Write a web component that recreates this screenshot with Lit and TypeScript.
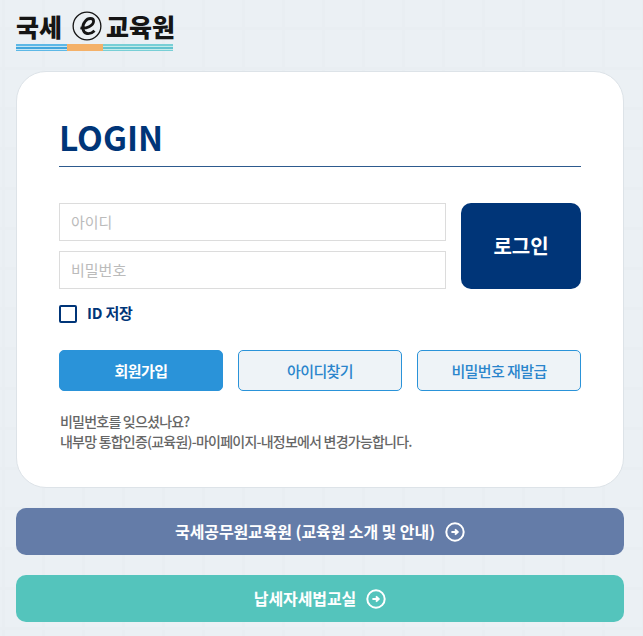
import { LitElement, html, css } from "lit";
import { customElement } from "lit/decorators.js";

const arrow = (size: number) => html`<svg class="arrow" width=${size} height=${size} viewBox="0 0 20 20" fill="none" stroke="#fff">
  <circle cx="10" cy="10" r="8.7" stroke-width="2"></circle>
  <path d="M6.4 10h5.8M10 7.4l2.7 2.6-2.7 2.6" stroke-width="2"></path>
</svg>`;

@customElement("app-root")
export class AppRoot extends LitElement {
  static styles = css`
    :host {
      display: block;
      width: 643px;
      height: 636px;
      overflow: hidden;
      box-sizing: border-box;
      padding: 0 19px 0 16px;
      background-color: #ebf0f4;
      background-image:
        linear-gradient(#e9eef2 3px, transparent 3px),
        linear-gradient(90deg, #e9eef2 3px, transparent 3px);
      background-size: 40px 40px;
      background-position: 2px 27px;
      font-family: "Noto Sans CJK KR", "Noto Sans", sans-serif;
      letter-spacing: -0.5px;
    }
    * { box-sizing: border-box; }
    .logo { height: 71px; padding-top: 8px; width: 157px; }
    .logo-text {
      height: 36px;
      display: flex;
      align-items: center;
      white-space: nowrap;
      color: #151515;
      font-weight: 900;
      font-size: 25px;
      line-height: 36px;
      letter-spacing: 0;
    }
    .logo-e { flex: none; margin: 0 4px 0 10px; }
    .stripes { display: flex; height: 7px; }
    .stripes i { display: block; height: 100%; }
    .s1 { width: 51px; background: repeating-linear-gradient(#5db8e6 0 2px, #c4e5f4 2px 3px, #42a6dc 3px 5px, #c4e5f4 5px 6px, #5db8e6 6px 7px); }
    .s2 { width: 36px; background: #f4b169; }
    .s3 { width: 70px; background: repeating-linear-gradient(#78cfd6 0 2px, #c4ebea 2px 3px, #63c3cf 3px 5px, #c4ebea 5px 6px, #78cfd6 6px 7px); }
    .card {
      height: 417px;
      background: #fff;
      border: 1px solid #dde3e8;
      border-radius: 30px;
      padding: 43px 42px 0;
    }
    h1 {
      margin: 0;
      height: 52px;
      font-size: 33.5px;
      line-height: 43px;
      font-weight: 700;
      letter-spacing: 0;
      color: #003578;
      border-bottom: 1px solid #2d5a8e;
    }
    .form { display: flex; gap: 15px; margin-top: 36px; }
    .fields { flex: 1; display: flex; flex-direction: column; gap: 10px; }
    .field {
      height: 38px;
      border: 1px solid #dcdcdc;
      padding: 0 11px;
      font-size: 15px;
      line-height: 35px;
      color: #bbbbbb;
      letter-spacing: 0;
    }
    .login {
      width: 120px;
      height: 86px;
      background: #003578;
      color: #fff;
      border-radius: 10px;
      font-size: 20px;
      line-height: 30px;
      font-weight: 700;
      display: flex;
      align-items: center;
      justify-content: center;
      letter-spacing: 0;
    }
    .save { display: flex; align-items: center; gap: 10px; margin-top: 16px; height: 18px; color: #003578; font-size: 15px; font-weight: 700; letter-spacing: -0.2px; }
    .save span:last-child { margin-top: -3px; }
    .check { width: 18px; height: 18px; border: 2px solid #003578; border-radius: 2px; flex: none; }
    .actions { display: grid; grid-template-columns: repeat(3, 164px); gap: 15px; margin-top: 27px; }
    .act {
      height: 41px;
      border-radius: 5px;
      border: 1px solid #2a93d9;
      background: #eef3f7;
      color: #2a85cc;
      font-size: 15px;
      font-weight: 500;
      display: flex;
      align-items: center;
      justify-content: center;
      letter-spacing: -0.6px;
    }
    .act.primary { background: #2a93d9; color: #fff; font-weight: 700; letter-spacing: -0.5px; }
    .note {
      margin: 20px 0 0;
      padding-left: 1px;
      font-size: 14px;
      line-height: 20px;
      color: #666;
      font-weight: 500;
      letter-spacing: -0.78px;
    }
    .link {
      height: 47px;
      border-radius: 10px;
      margin-top: 20px;
      color: #fff;
      font-size: 16px;
      font-weight: 700;
      display: flex;
      align-items: center;
      justify-content: center;
      gap: 10px;
      letter-spacing: -0.1px;
    }
    .link span { margin-top: -2px; }
    .link.slate { background: #647ca8; }
    .link.teal { background: #54c4bc; }
    .arrow { flex: none; }
  `;

  render() {
    return html`
      <div class="logo">
        <div class="logo-text">
          <span>국세</span>
          <svg class="logo-e" width="30" height="30" viewBox="0 0 32 32" fill="none" stroke="#151515">
            <circle cx="16" cy="16" r="14.8" stroke-width="1.4"></circle>
            <path d="M9 18c6 1 14-2 14-7 0-4-6-4-9 0-4 5-3 12 2 13 3 .6 6-1 8-3" stroke-width="3"></path>
          </svg>
          <span>교육원</span>
        </div>
        <div class="stripes"><i class="s1"></i><i class="s2"></i><i class="s3"></i></div>
      </div>
      <div class="card">
        <h1>LOGIN</h1>
        <div class="form">
          <div class="fields">
            <div class="field">아이디</div>
            <div class="field">비밀번호</div>
          </div>
          <div class="login">로그인</div>
        </div>
        <div class="save"><span class="check"></span><span>ID 저장</span></div>
        <div class="actions">
          <div class="act primary">회원가입</div>
          <div class="act">아이디찾기</div>
          <div class="act">비밀번호 재발급</div>
        </div>
        <p class="note">비밀번호를 잊으셨나요?<br />내부망 통합인증(교육원)-마이페이지-내정보에서 변경가능합니다.</p>
      </div>
      <div class="link slate"><span>국세공무원교육원 (교육원 소개 및 안내)</span> ${arrow(20)}</div>
      <div class="link teal"><span>납세자세법교실</span> ${arrow(20)}</div>
    `;
  }
}
